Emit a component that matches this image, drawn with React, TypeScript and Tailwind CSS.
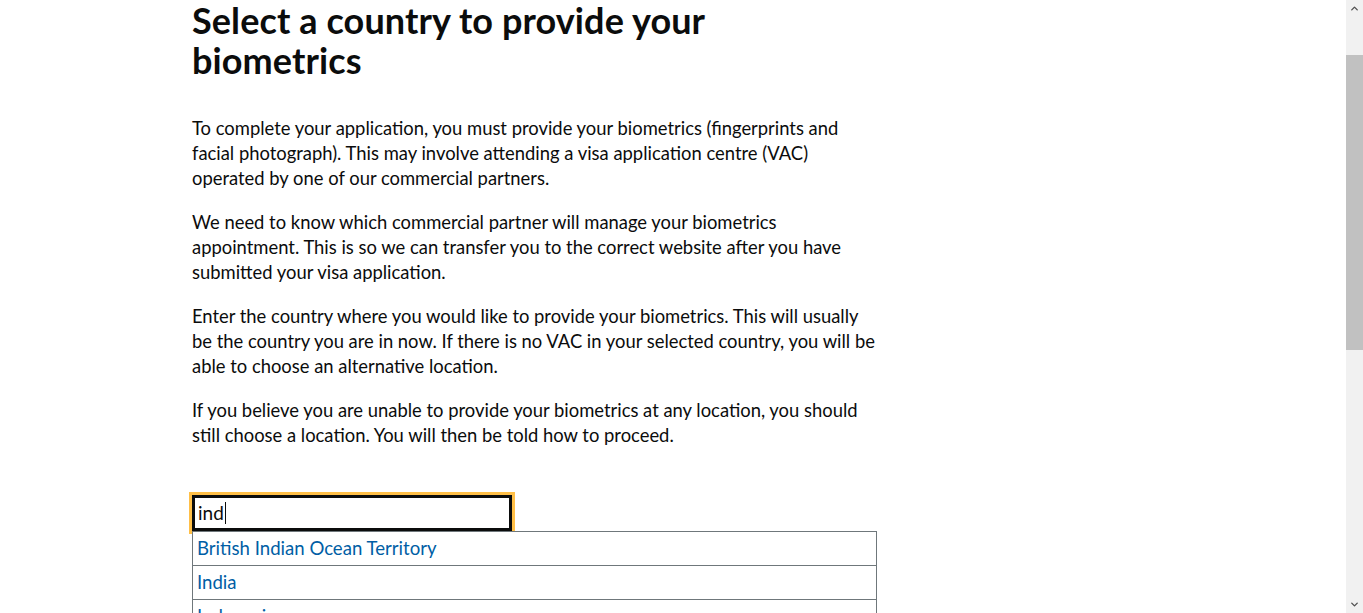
import { ChevronUp, ChevronDown } from "lucide-react";

// each paragraph split where the reference wraps it
const paragraphs = [
  [
    "To complete your application, you must provide your biometrics (fingerprints and",
    "facial photograph). This may involve attending a visa application centre (VAC)",
    "operated by one of our commercial partners.",
  ],
  [
    "We need to know which commercial partner will manage your biometrics",
    "appointment. This is so we can transfer you to the correct website after you have",
    "submitted your visa application.",
  ],
  [
    "Enter the country where you would like to provide your biometrics. This will usually",
    "be the country you are in now. If there is no VAC in your selected country, you will be",
    "able to choose an alternative location.",
  ],
  [
    "If you believe you are unable to provide your biometrics at any location, you should",
    "still choose a location. You will then be told how to proceed.",
  ],
];

const results = ["British Indian Ocean Territory", "India", "Indonesia"];

export default function App() {
  return (
    <div className="flex h-[613px] w-full overflow-hidden bg-white font-['Lato',sans-serif] text-[#0b0c0c]">
      <main className="flex-1 pl-[192px]">
        <div className="w-[685px]">
          <h1 className="mb-[36px] text-[36px] font-bold leading-[40px] tracking-[0.1px]">
            Select a country to provide your biometrics
          </h1>
          {paragraphs.map((lines, i) => (
            <p key={i} className="mb-[19px] text-[18.4px] leading-[25px]">
              {lines.map((l) => (
                <span key={l} className="block whitespace-nowrap">
                  {l}
                </span>
              ))}
            </p>
          ))}

          <div className="relative mt-[47px]">
            <div className="relative z-0 h-[36px] w-[320px] border-[3px] border-[#0b0c0c] px-[3px] text-[19px] leading-[30px] outline outline-[3px] outline-[#ffbf47]">
              ind<span className="ml-px inline-block h-[22px] w-px translate-y-[4px] bg-[#0b0c0c]" />
            </div>
            <ul className="relative z-10 border border-b-0 border-[#6f777b] bg-white">
              {results.map((r) => (
                <li
                  key={r}
                  className="h-[34px] border-b border-[#6f777b] px-[4px] text-[18.6px] leading-[32px] text-[#005ea5]"
                >
                  {r}
                </li>
              ))}
            </ul>
          </div>
        </div>
      </main>

      <div className="flex w-[17px] shrink-0 flex-col bg-[#f1f1f1]">
        <div className="flex h-[17px] items-center justify-center text-[#505050]">
          <ChevronUp size={11} strokeWidth={3} />
        </div>
        <div className="mt-[38px] h-[295px] bg-[#c1c1c1]" />
        <div className="flex-1" />
        <div className="flex h-[17px] items-center justify-center text-[#505050]">
          <ChevronDown size={11} strokeWidth={3} />
        </div>
      </div>
    </div>
  );
}
